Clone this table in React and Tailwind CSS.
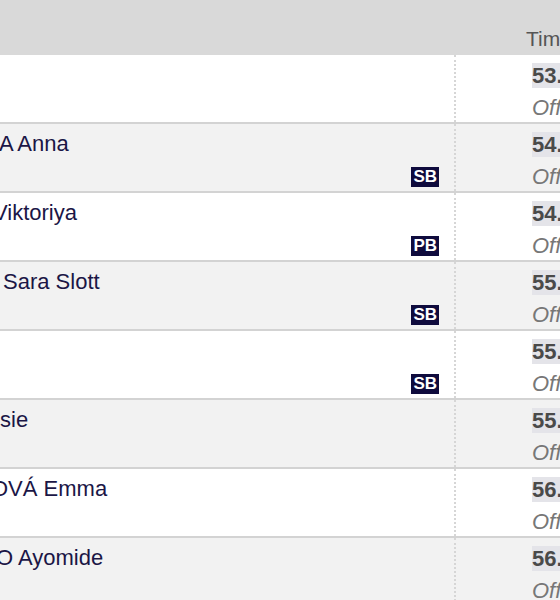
const rows = [
  { name: "", offset: "ml-0", badge: null, time: "53.57" },
  { name: "A Anna", offset: "-ml-[1px]", badge: "SB", time: "54.06" },
  { name: "Viktoriya", offset: "-ml-[7px]", badge: "PB", time: "54.18" },
  { name: "Sara Slott", offset: "ml-[3px]", badge: "SB", time: "55.05" },
  { name: "", offset: "ml-0", badge: "SB", time: "55.21" },
  { name: "sie", offset: "ml-0", badge: null, time: "55.84" },
  { name: "OVÁ Emma", offset: "-ml-[9px]", badge: null, time: "56.02" },
  { name: "O Ayomide", offset: "-ml-[4px]", badge: null, time: "56.40" },
];

function Row({ row, index }) {
  const bg = index % 2 === 0 ? "bg-white" : "bg-[#f2f2f2]";
  return (
    <div className={`flex h-[69px] shrink-0 border-b-2 border-[#d3d3d3] ${bg}`}>
      <div className="flex w-[454px] shrink-0 flex-col overflow-hidden pt-[7px] pb-[4px] pr-[15px]">
        <div className={`whitespace-nowrap text-[22px] leading-[26px] text-[#1b1646] ${row.offset}`}>
          {row.name}
        </div>
        {row.badge && (
          <div className="mt-auto flex justify-end">
            <span className="bg-[#0f0b3d] px-[2px] text-[17px] font-bold leading-[20px] text-white">
              {row.badge}
            </span>
          </div>
        )}
      </div>
      <div className="flex flex-1 flex-col overflow-hidden whitespace-nowrap border-l-2 border-dotted border-[#d6d6d6] pl-[76px] pt-[8px]">
        <div className="text-[22px] font-bold leading-[26px] text-[#4a4a4a]">
          <span className="bg-[#e4e4e9]">{row.time}</span>
        </div>
        <div className="mt-[6px] text-[22px] italic leading-[26px] text-[#777777]">Official</div>
      </div>
    </div>
  );
}

export default function App() {
  return (
    <div
      className="flex h-[600px] w-[560px] flex-col overflow-hidden bg-white"
      style={{ fontFamily: '"Liberation Sans", Arial, sans-serif' }}
    >
      <div className="flex h-[55px] shrink-0 bg-[#d9d9d9]">
        <div className="w-[456px] shrink-0" />
        <div className="whitespace-nowrap pl-[70px] pt-[27px] text-[21px] leading-[24px] text-[#555555]">
          Time
        </div>
      </div>
      {rows.map((row, i) => (
        <Row key={i} row={row} index={i} />
      ))}
    </div>
  );
}
